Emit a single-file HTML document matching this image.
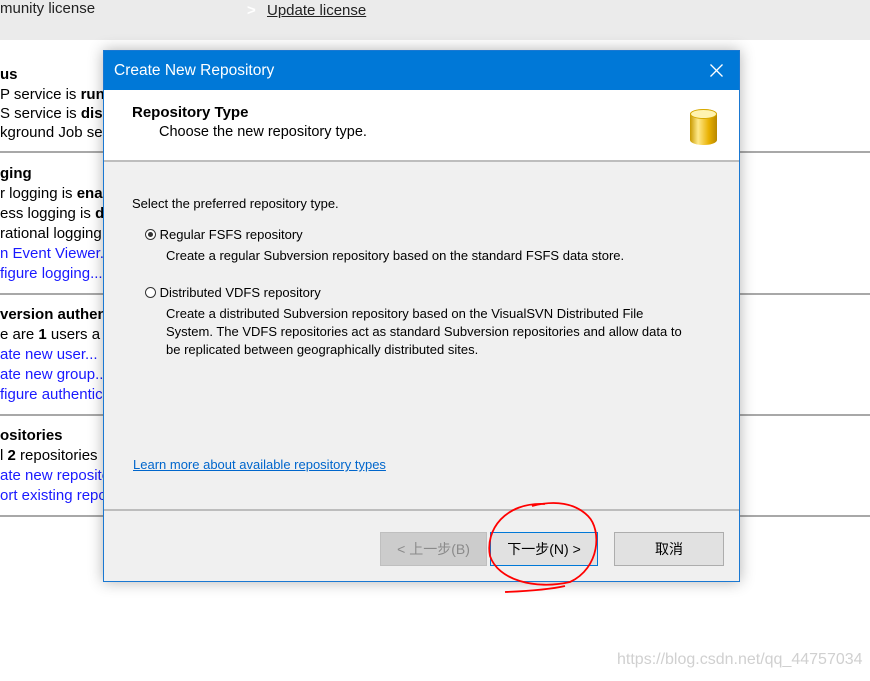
<!DOCTYPE html>
<html><head><meta charset="utf-8"><style>
*{margin:0;padding:0;box-sizing:border-box}
body{width:870px;height:681px;background:#fff;position:relative;overflow:hidden;font-family:"Liberation Sans","Noto Sans CJK SC",sans-serif;color:#000}
.top{position:absolute;left:0;top:0;width:870px;height:40px;background:#ebebeb}
.t{position:absolute;font-size:15px;white-space:nowrap;line-height:20px}
.sep{position:absolute;left:0;width:870px;height:2px;background:#a8a8a8}
a,.lk{color:#1a1aff}
#dlg{position:absolute;left:103px;top:50px;width:637px;height:532px;background:#f0f0f0;border:1px solid #1a78d2;box-shadow:0 0 14px rgba(0,0,0,.3)}
.ttl{height:39px;background:#0078d7;color:#fff;font-size:15.5px;line-height:40px;padding-left:10px}
.hdr{position:absolute;left:0;top:39px;width:635px;height:72px;background:#fff;border-bottom:2px solid #bdbdbd}
.d{position:absolute;font-size:13px;white-space:nowrap}
.btn{position:absolute;top:481px;height:34px;background:#e1e1e1;border:1px solid #adadad;font-size:14px;text-align:center;line-height:32px}
</style></head><body>
<div class="top"></div>
<div class="t" style="left:0;top:-1px;color:#222">munity license</div>
<div class="t" style="left:247px;top:1px;color:#fff;font-weight:bold">&gt;</div>
<div class="t" style="left:267px;top:1px;text-decoration:underline;color:#222">Update license</div>

<div class="t" style="left:0;top:65px;font-weight:bold">us</div>
<div class="t" style="left:0;top:85px">P service is <b>run</b></div>
<div class="t" style="left:0;top:104px">S service is <b>dis</b></div>
<div class="t" style="left:0;top:123px">kground Job se</div>
<div class="sep" style="top:151px"></div>
<div class="t" style="left:0;top:164px;font-weight:bold">ging</div>
<div class="t" style="left:0;top:184px">r logging is <b>ena</b></div>
<div class="t" style="left:0;top:204px">ess logging is <b>d</b></div>
<div class="t" style="left:0;top:224px">rational logging</div>
<div class="t lk" style="left:0;top:244px">n Event Viewer.</div>
<div class="t lk" style="left:0;top:264px">figure logging...</div>
<div class="sep" style="top:293px"></div>
<div class="t" style="left:0;top:305px;font-weight:bold">version authen</div>
<div class="t" style="left:0;top:325px">e are <b>1</b> users a</div>
<div class="t lk" style="left:0;top:345px">ate new user...</div>
<div class="t lk" style="left:0;top:365px">ate new group...</div>
<div class="t lk" style="left:0;top:385px">figure authentic</div>
<div class="sep" style="top:414px"></div>
<div class="t" style="left:0;top:426px;font-weight:bold">ositories</div>
<div class="t" style="left:0;top:446px">l <b>2</b> repositories</div>
<div class="t lk" style="left:0;top:466px">ate new reposito</div>
<div class="t lk" style="left:0;top:486px">ort existing repo</div>
<div class="sep" style="top:515px"></div>

<div id="dlg">
<div class="ttl">Create New Repository</div>
<svg style="position:absolute;right:16px;top:13px" width="13" height="13"><path d="M0.5 0.5L12.5 12.5M12.5 0.5L0.5 12.5" stroke="#fff" stroke-width="1.3"/></svg>
<div class="hdr">
 <div style="position:absolute;left:28px;top:14px;font-size:15px;font-weight:bold">Repository Type</div>
 <div style="position:absolute;left:55px;top:34px;font-size:14.5px">Choose the new repository type.</div>
 <div style="position:absolute;left:586px;top:19px;width:27px;height:36px;border-radius:13px/5px;background:linear-gradient(90deg,#c99a00,#ffe98a 30%,#e8b000 70%,#b88800)"></div>
 <div style="position:absolute;left:586px;top:19px;width:27px;height:10px;border-radius:50%;background:#fff3b0;border:1px solid #d6a800"></div>
</div>
<div class="d" style="left:28px;top:145px">Select the preferred repository type.</div>
<div class="d" style="left:41px;top:176px"><span style="display:inline-block;width:11px;height:11px;border:1px solid #333;border-radius:50%;vertical-align:-1px;position:relative;background:#fff"><span style="position:absolute;left:2px;top:2px;width:5px;height:5px;border-radius:50%;background:#333"></span></span> Regular FSFS repository</div>
<div class="d" style="left:62px;top:197px">Create a regular Subversion repository based on the standard FSFS data store.</div>
<div class="d" style="left:41px;top:234px"><span style="display:inline-block;width:11px;height:11px;border:1px solid #333;border-radius:50%;vertical-align:-1px;background:#fff"></span> Distributed VDFS repository</div>
<div class="d" style="left:62px;top:254px;line-height:18px">Create a distributed Subversion repository based on the VisualSVN Distributed File<br>System. The VDFS repositories act as standard Subversion repositories and allow data to<br>be replicated between geographically distributed sites.</div>
<div class="d" style="left:29px;top:406px;color:#0066cc;text-decoration:underline">Learn more about available repository types</div>
<div style="position:absolute;left:0;top:458px;width:635px;height:2px;background:#bdbdbd"></div>
<div class="btn" style="left:276px;width:107px;background:#cccccc;border-color:#bfbfbf;color:#8a8a8a">&lt; 上一步(B)</div>
<div class="btn" style="left:386px;width:108px;border-color:#0078d7">下一步(N) &gt;</div>
<div class="btn" style="left:510px;width:110px">取消</div>
</div>

<svg style="position:absolute;left:0;top:0" width="870" height="681"><path d="M545 504 C505 502 485 530 490 556 C498 580 535 590 570 582 C600 568 602 530 588 516 C575 503 555 500 532 506 M505 592 C530 591 552 589 565 586" fill="none" stroke="#ff0000" stroke-width="1.8"/></svg>
<div style="position:absolute;left:617px;top:651px;font-size:16px;color:#d0d0d0">https://blog.csdn.net/qq_44757034</div>
</body></html>
